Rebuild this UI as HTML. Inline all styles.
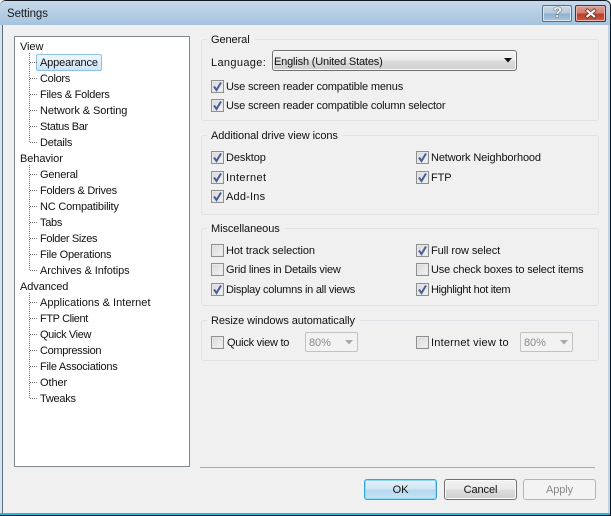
<!DOCTYPE html>
<html><head><meta charset="utf-8"><style>
html,body{margin:0;padding:0;background:#f0f0f0}
#w{position:relative;width:611px;height:516px;overflow:hidden;background:#f0f0f0;font:11px/16px "Liberation Sans",sans-serif;color:#111}
#w div,#w span{position:absolute}
.t{white-space:nowrap;height:16px;letter-spacing:-.08px;margin-top:1px}
.g{left:201px;width:396px;border:1px solid #dfe3e8;border-radius:3px;background:#f0f0f0}
.l{background:#f0f0f0;padding:0 5px 0 4px;left:207px}
.v{left:29px;width:0;border-left:1px dotted #777}
.h{left:30px;width:7px;height:0;border-top:1px dotted #777}
.c{width:11px;height:11px;border:1px solid #8e8f8f;background:linear-gradient(135deg,#d8d8d8,#f4f4f4);box-shadow:inset 0 0 0 1px #e8e8e8}
.b{height:19px;width:71px;border:1px solid #707070;border-radius:3px;text-align:center;background:linear-gradient(#f2f2f2 0,#ebebeb 48%,#dddddd 52%,#cfcfcf 100%);box-shadow:inset 0 0 0 1px #fbfbfb}
.s{height:18px;width:51px;border:1px solid #c2c2c2;border-radius:2px;background:#f2f2f2}
svg{position:absolute}
</style></head><body><div id="w">
<div style="left:0;top:0;width:611px;height:516px;background:#0f1a24;border-radius:6px 6px 0 0"></div>
<div style="left:0;top:1px;width:610px;height:514px;background:#27b7e0;border-radius:5px 5px 0 0"></div>
<div style="left:0;top:1px;width:610px;height:24px;background:linear-gradient(#c8d9ea,#a5c3df);border-radius:5px 5px 0 0"></div>
<div style="left:0;top:25px;width:2px;height:488px;background:#d5e3ef"></div>
<div style="left:2px;top:25px;width:1px;height:488px;background:#5f6f7d"></div>
<div style="left:608px;top:25px;width:2px;height:488px;background:#bcd3e8"></div>
<div style="left:3px;top:25px;width:605px;height:488px;background:#f0f0f0"></div>
<span class="t" style="left:7px;top:5px;font-size:11.5px;color:#1a1a1a">Settings</span>

<div style="left:542px;top:5px;width:28px;height:15px;border:1px solid #5a7288;border-radius:2px;background:linear-gradient(#c9d9e8 0,#b5cade 48%,#8fb0cd 52%,#a9c6de 100%);box-shadow:inset 0 0 0 1px #dbe6f0"></div>
<span class="t" style="left:553px;top:3px;margin:0;font:bold 15px/20px 'Liberation Sans',sans-serif;color:#f4f4f4;text-shadow:0 0 1px #222,0 0 1px #222">?</span>
<div style="left:575px;top:5px;height:15px;width:29px;border:1px solid #5c2d2d;border-radius:2px;background:linear-gradient(#dd9c90 0,#cf7f72 48%,#b83c28 52%,#cc5a44 100%);box-shadow:inset 0 0 0 1px #e8b5ac"></div>
<svg style="left:584px;top:8px" width="14" height="11"><path d="M2 1.5L11.5 9.5M11.5 1.5L2 9.5" stroke="#3a2a2a" stroke-width="3.6"/><path d="M2.5 2L11 9M11 2L2.5 9" stroke="#f6f2f0" stroke-width="2.2"/></svg>

<!-- tree -->
<div style="left:14px;top:36px;width:174px;height:429px;background:#fff;border:1px solid #7f8790"></div>
<div style="left:36px;top:54px;width:64px;height:15px;border:1px solid #8fc1e6;border-radius:2px;background:linear-gradient(#f0f7fd,#cfe5f8)"></div>
<div class="v" style="top:53px;height:89px"></div>
<div class="v" style="top:165px;height:105px"></div>
<div class="v" style="top:293px;height:105px"></div>
<div class="h" style="top:62px"></div><div class="h" style="top:78px"></div><div class="h" style="top:94px"></div><div class="h" style="top:110px"></div><div class="h" style="top:126px"></div><div class="h" style="top:142px"></div>
<div class="h" style="top:174px"></div><div class="h" style="top:190px"></div><div class="h" style="top:206px"></div><div class="h" style="top:222px"></div><div class="h" style="top:238px"></div><div class="h" style="top:254px"></div><div class="h" style="top:270px"></div>
<div class="h" style="top:302px"></div><div class="h" style="top:318px"></div><div class="h" style="top:334px"></div><div class="h" style="top:350px"></div><div class="h" style="top:366px"></div><div class="h" style="top:382px"></div><div class="h" style="top:398px"></div>
<span class="t" style="left:20px;top:38px">View</span>
<span class="t" style="left:40px;top:54px;letter-spacing:-.15px">Appearance</span>
<span class="t" style="left:40px;top:70px;letter-spacing:-.3px">Colors</span>
<span class="t" style="left:40px;top:86px;letter-spacing:-.25px">Files &amp; Folders</span>
<span class="t" style="left:40px;top:102px">Network &amp; Sorting</span>
<span class="t" style="left:40px;top:118px;letter-spacing:-.35px">Status Bar</span>
<span class="t" style="left:40px;top:134px;letter-spacing:-.2px">Details</span>
<span class="t" style="left:20px;top:150px">Behavior</span>
<span class="t" style="left:40px;top:166px;letter-spacing:-.2px">General</span>
<span class="t" style="left:40px;top:182px;letter-spacing:-.28px">Folders &amp; Drives</span>
<span class="t" style="left:40px;top:198px;letter-spacing:-.2px">NC Compatibility</span>
<span class="t" style="left:40px;top:214px;letter-spacing:-.3px">Tabs</span>
<span class="t" style="left:40px;top:230px;letter-spacing:-.33px">Folder Sizes</span>
<span class="t" style="left:40px;top:246px;letter-spacing:-.22px">File Operations</span>
<span class="t" style="left:40px;top:262px">Archives &amp; Infotips</span>
<span class="t" style="left:20px;top:278px">Advanced</span>
<span class="t" style="left:40px;top:294px;letter-spacing:.02px">Applications &amp; Internet</span>
<span class="t" style="left:40px;top:310px;letter-spacing:-.38px">FTP Client</span>
<span class="t" style="left:40px;top:326px;letter-spacing:-.38px">Quick View</span>
<span class="t" style="left:40px;top:342px;letter-spacing:-.33px">Compression</span>
<span class="t" style="left:40px;top:358px;letter-spacing:-.26px">File Associations</span>
<span class="t" style="left:40px;top:374px">Other</span>
<span class="t" style="left:40px;top:390px;letter-spacing:-.25px">Tweaks</span>

<!-- groups -->
<div class="g" style="top:39px;height:80px"></div>
<div class="g" style="top:135px;height:78px"></div>
<div class="g" style="top:228px;height:76px"></div>
<div class="g" style="top:320px;height:39px"></div>
<span class="t l" style="top:31px">General</span>
<span class="t l" style="top:127px">Additional drive view icons</span>
<span class="t l" style="top:220px">Miscellaneous</span>
<span class="t l" style="top:312px">Resize windows automatically</span>

<span class="t" style="left:211px;top:54px;letter-spacing:.35px">Language:</span>
<div style="left:272px;top:50px;width:243px;height:19px;border:1px solid #707070;border-radius:3px;background:linear-gradient(#f4f4f4 0,#ececec 48%,#dcdcdc 52%,#cfcfcf 100%);box-shadow:inset 0 0 0 1px #fafafa"></div>
<span class="t" style="left:274px;top:53px;letter-spacing:-.17px">English (United States)</span>
<svg style="left:504px;top:58px" width="9" height="6"><path d="M0 0H8L4 4.5Z" fill="#111"/></svg>

<svg width="0" height="0" style="position:absolute"><defs><path id="k" d="M3 6.5L5.5 10L10 2.5" fill="none" stroke="#4a5f9a" stroke-width="2"/></defs></svg>

<div class="c" style="left:211px;top:80px"></div><svg style="left:211px;top:80px" width="13" height="13"><use href="#k"/></svg>
<span class="t" style="left:226px;top:78px;letter-spacing:-.17px">Use screen reader compatible menus</span>
<div class="c" style="left:211px;top:99px"></div><svg style="left:211px;top:99px" width="13" height="13"><use href="#k"/></svg>
<span class="t" style="left:226px;top:97px;letter-spacing:-.17px">Use screen reader compatible column selector</span>

<div class="c" style="left:211px;top:151px"></div><svg style="left:211px;top:151px" width="13" height="13"><use href="#k"/></svg>
<span class="t" style="left:226px;top:149px">Desktop</span>
<div class="c" style="left:211px;top:171px"></div><svg style="left:211px;top:171px" width="13" height="13"><use href="#k"/></svg>
<span class="t" style="left:226px;top:169px;letter-spacing:.4px">Internet</span>
<div class="c" style="left:211px;top:190px"></div><svg style="left:211px;top:190px" width="13" height="13"><use href="#k"/></svg>
<span class="t" style="left:226px;top:188px;letter-spacing:.2px">Add-Ins</span>
<div class="c" style="left:416px;top:151px"></div><svg style="left:416px;top:151px" width="13" height="13"><use href="#k"/></svg>
<span class="t" style="left:431px;top:149px;letter-spacing:-.13px">Network Neighborhood</span>
<div class="c" style="left:416px;top:171px"></div><svg style="left:416px;top:171px" width="13" height="13"><use href="#k"/></svg>
<span class="t" style="left:431px;top:169px">FTP</span>

<div class="c" style="left:211px;top:244px"></div>
<span class="t" style="left:226px;top:242px">Hot track selection</span>
<div class="c" style="left:211px;top:263px"></div>
<span class="t" style="left:226px;top:261px;letter-spacing:-.2px">Grid lines in Details view</span>
<div class="c" style="left:211px;top:283px"></div><svg style="left:211px;top:283px" width="13" height="13"><use href="#k"/></svg>
<span class="t" style="left:226px;top:281px;letter-spacing:-.26px">Display columns in all views</span>
<div class="c" style="left:416px;top:244px"></div><svg style="left:416px;top:244px" width="13" height="13"><use href="#k"/></svg>
<span class="t" style="left:431px;top:242px">Full row select</span>
<div class="c" style="left:416px;top:263px"></div>
<span class="t" style="left:431px;top:261px;letter-spacing:-.15px">Use check boxes to select items</span>
<div class="c" style="left:416px;top:283px"></div><svg style="left:416px;top:283px" width="13" height="13"><use href="#k"/></svg>
<span class="t" style="left:431px;top:281px;letter-spacing:-.32px">Highlight hot item</span>

<div class="c" style="left:211px;top:336px"></div>
<span class="t" style="left:227px;top:334px;letter-spacing:-.25px">Quick view to</span>
<div class="s" style="left:305px;top:332px"></div>
<span class="t" style="left:309px;top:334px;color:#8a8a8a">80%</span>
<svg style="left:345px;top:340px" width="9" height="6"><path d="M0 0H8L4 4.5Z" fill="#a8a8a8"/></svg>
<div class="c" style="left:416px;top:336px"></div>
<span class="t" style="left:431px;top:334px;letter-spacing:.2px">Internet view to</span>
<div class="s" style="left:520px;top:332px"></div>
<span class="t" style="left:524px;top:334px;color:#8a8a8a">80%</span>
<svg style="left:560px;top:340px" width="9" height="6"><path d="M0 0H8L4 4.5Z" fill="#a8a8a8"/></svg>

<!-- bottom -->
<div style="left:200px;top:467px;width:395px;height:1px;background:#aaa"></div>
<div class="b" style="left:364px;top:479px;border-color:#2fa5d8;background:linear-gradient(#e6f3fa 0,#cfe6f4 48%,#b4d8ee 52%,#c6e3f4 100%);box-shadow:inset 0 0 0 1px #8fd8f5"></div>
<span class="t" style="left:364px;top:481px;width:73px;text-align:center">OK</span>
<div class="b" style="left:444px;top:479px"></div>
<span class="t" style="left:444px;top:481px;width:73px;text-align:center">Cancel</span>
<div class="b" style="left:523px;top:479px;border-color:#b5b5b5;background:#f3f3f3;box-shadow:none"></div>
<span class="t" style="left:523px;top:481px;width:73px;text-align:center;color:#8a8a8a">Apply</span>
</div></body></html>
